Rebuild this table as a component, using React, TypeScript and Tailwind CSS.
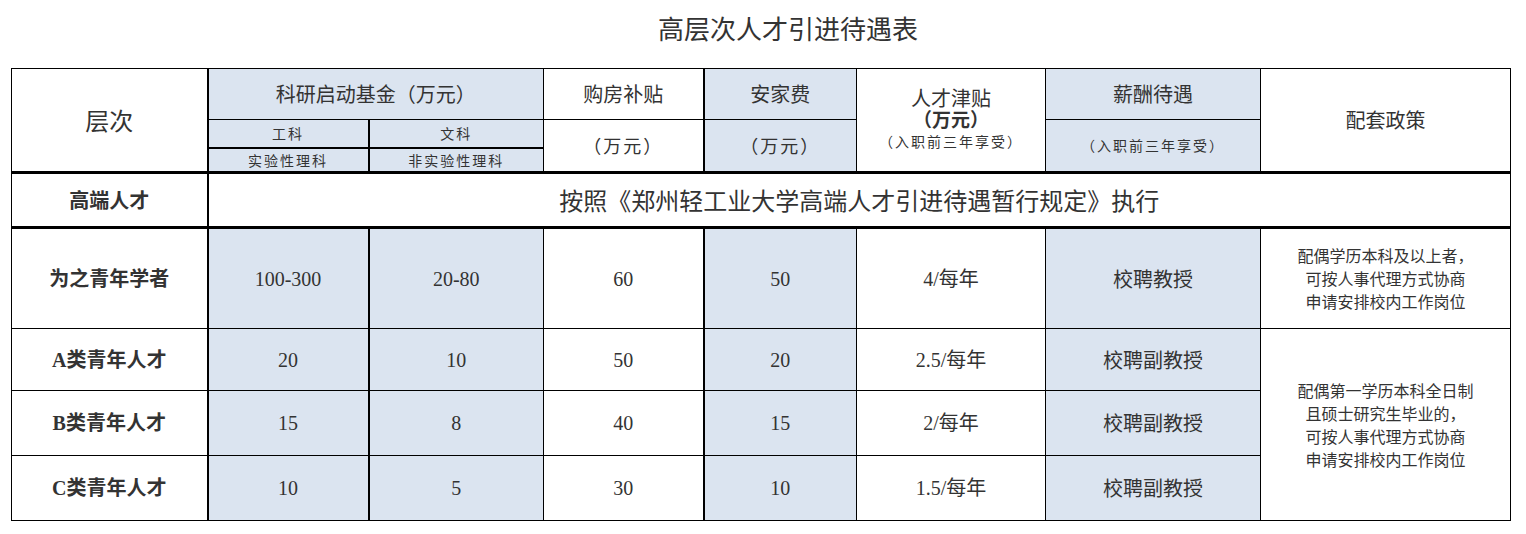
import * as React from 'react';

/**
 * Data
 */
interface IRow {
  label: string;
  science: string;
  arts: string;
  house: string;
  settle: string;
  allowance: string;
  salary: string;
  height: string;
}

const rows: IRow[] = [
  { label: '为之青年学者', science: '100-300', arts: '20-80', house: '60', settle: '50', allowance: '4/每年', salary: '校聘教授', height: 'h-[101px]' },
  { label: 'A类青年人才', science: '20', arts: '10', house: '50', settle: '20', allowance: '2.5/每年', salary: '校聘副教授', height: 'h-[62px]' },
  { label: 'B类青年人才', science: '15', arts: '8', house: '40', settle: '15', allowance: '2/每年', salary: '校聘副教授', height: 'h-[65px]' },
  { label: 'C类青年人才', science: '10', arts: '5', house: '30', settle: '10', allowance: '1.5/每年', salary: '校聘副教授', height: 'h-[65px]' },
];

const cell = 'border border-black p-0 text-center align-middle';
const blue = 'bg-[#dbe4f0]';
const serif = "font-['Liberation_Serif','Noto_Sans_CJK_SC',serif]";

const App: React.FC = () => {
  return (
    <div className="w-[1526px] h-[534px] overflow-hidden bg-white text-[#333] font-['Noto_Sans_CJK_SC',sans-serif]">
      <div className="h-[68px] pt-[12px] pl-[50px] text-center text-[26px] leading-[32px]">高层次人才引进待遇表</div>
      <table className="ml-[11px] w-[1499px] table-fixed border-collapse">
        <colgroup>
          <col className="w-[196px]" />
          <col className="w-[161px]" />
          <col className="w-[175px]" />
          <col className="w-[160px]" />
          <col className="w-[153px]" />
          <col className="w-[189px]" />
          <col className="w-[215px]" />
          <col className="w-[250px]" />
        </colgroup>
        <thead>
          <tr className="h-[51px]">
            <td rowSpan={3} className={`${cell} text-[24px]`}>层次</td>
            <td colSpan={2} className={`${cell} ${blue} border-l-2 text-[20px]`}>科研启动基金（万元）</td>
            <td className={`${cell} text-[20px]`}>购房补贴</td>
            <td className={`${cell} ${blue} border-l-2 text-[20px]`}>安家费</td>
            <td rowSpan={3} className={cell}>
              <div className="text-[20px] leading-[22px]">人才津贴</div>
              <div className="text-[19px] leading-[20px] font-bold">（万元）</div>
              <div className="text-[14px] leading-[24px] tracking-[2px]">（入职前三年享受）</div>
            </td>
            <td className={`${cell} ${blue} text-[20px]`}>薪酬待遇</td>
            <td rowSpan={3} className={`${cell} text-[20px]`}>配套政策</td>
          </tr>
          <tr className="h-[28px]">
            <td className={`${cell} ${blue} border-l-2 text-[14px] leading-none tracking-[2px]`}>工科</td>
            <td className={`${cell} ${blue} border-l-2 text-[14px] leading-none tracking-[2px]`}>文科</td>
            <td rowSpan={2} className={`${cell} text-[18px] tracking-[2px]`}>（万元）</td>
            <td rowSpan={2} className={`${cell} ${blue} border-l-2 text-[18px] tracking-[2px]`}>（万元）</td>
            <td rowSpan={2} className={`${cell} ${blue} text-[14px] tracking-[2px]`}>（入职前三年享受）</td>
          </tr>
          <tr className="h-[25px]">
            <td className={`${cell} ${blue} border-l-2 border-t-2 text-[14px] leading-none tracking-[2px]`}>实验性理科</td>
            <td className={`${cell} ${blue} border-l-2 border-t-2 text-[14px] leading-none tracking-[2px]`}>非实验性理科</td>
          </tr>
        </thead>
        <tbody>
          <tr className="h-[55px]">
            <td className={`${cell} border-t-[3px] text-[20px] font-bold`}>高端人才</td>
            <td colSpan={7} className={`${cell} border-l-2 border-t-[3px] text-[24px]`}>
              按照《郑州轻工业大学高端人才引进待遇暂行规定》执行
            </td>
          </tr>
          {rows.map((row, index) => (
            <tr key={row.label} className={row.height}>
              <td className={`${cell} ${serif} text-[20px] font-bold ${index === 0 ? 'border-t-[3px]' : ''}`}>{row.label}</td>
              <td className={`${cell} ${serif} ${blue} border-l-2 text-[20px] ${index === 0 ? 'border-t-[3px]' : ''}`}>{row.science}</td>
              <td className={`${cell} ${serif} ${blue} border-l-2 text-[20px] ${index === 0 ? 'border-t-[3px]' : ''}`}>{row.arts}</td>
              <td className={`${cell} ${serif} text-[20px] ${index === 0 ? 'border-t-[3px]' : ''}`}>{row.house}</td>
              <td className={`${cell} ${serif} ${blue} border-l-2 text-[20px] ${index === 0 ? 'border-t-[3px]' : ''}`}>{row.settle}</td>
              <td className={`${cell} ${serif} text-[20px] ${index === 0 ? 'border-t-[3px]' : ''}`}>{row.allowance}</td>
              <td className={`${cell} ${blue} text-[20px] ${index === 0 ? 'border-t-[3px]' : ''}`}>{row.salary}</td>
              {index === 0 && (
                <td className={`${cell} border-t-[3px] text-[16px] leading-[23px]`}>
                  <div>配偶学历本科及以上者，</div>
                  <div>可按人事代理方式协商</div>
                  <div>申请安排校内工作岗位</div>
                </td>
              )}
              {index === 1 && (
                <td rowSpan={3} className={`${cell} text-[16px] leading-[23px]`}>
                  <div>配偶第一学历本科全日制</div>
                  <div>且硕士研究生毕业的，</div>
                  <div>可按人事代理方式协商</div>
                  <div>申请安排校内工作岗位</div>
                </td>
              )}
            </tr>
          ))}
        </tbody>
      </table>
    </div>
  );
};

export default App;
